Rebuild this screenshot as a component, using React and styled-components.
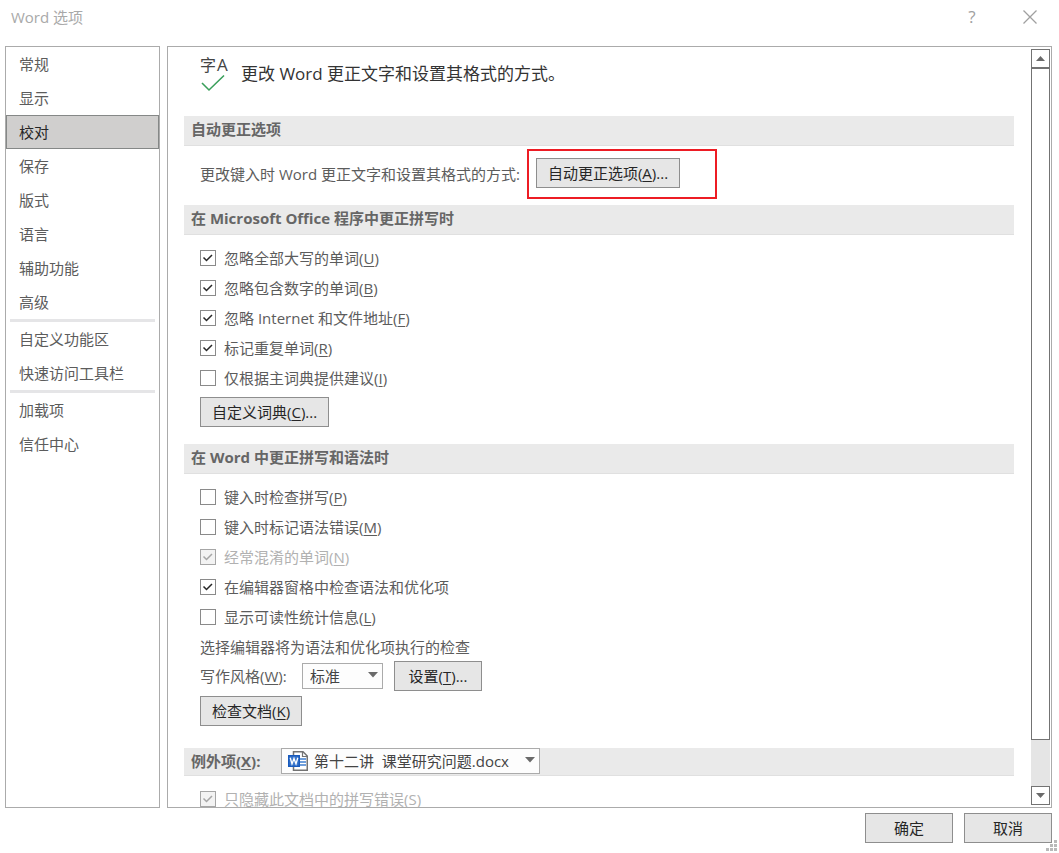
import React from "react";
import styled, { createGlobalStyle } from "styled-components";

const GlobalStyle = createGlobalStyle`
  * {
    box-sizing: border-box;
  }
  body {
    margin: 0;
    background-color: white;
  }
  body, button, input, select {
    font-family: "Open Sans", "Noto Sans CJK SC", sans-serif;
    font-size: 15px;
    line-height: 20px;
  }
  u {
    text-underline-offset: 2px;
    text-decoration-thickness: 1px;
  }
`;

const Dialog = styled.div`
  position: relative;
  display: flex;
  flex-direction: column;
  height: 100vh;
  color: #5c5c5c;
`;

const TitleBar = styled.header`
  display: flex;
  align-items: flex-start;
  height: 46px;
  padding: 7px 15px 0 11px;
  color: #a9a9a9;

  h1 {
    flex: 1;
    margin: 0;
    font-size: 15px;
    font-weight: normal;
  }
`;

const TitleButton = styled.button`
  display: flex;
  justify-content: center;
  align-items: center;
  width: 28px;
  height: 20px;
  margin-left: 30px;
  padding: 0;
  border: none;
  background: none;
  color: #a0a0a0;
  font-size: 17px;
`;

const Body = styled.div`
  flex: 1;
  min-height: 0;
  display: flex;
  gap: 7px;
  padding: 0 7px 0 5px;
`;

const Sidebar = styled.nav`
  width: 155px;
  flex-shrink: 0;
  border: 1px solid #ababab;

  hr {
    height: 3px;
    margin: 0 4px;
    border: none;
    background-color: #e5e5e7;
  }
`;

const NavItem = styled.button`
  display: block;
  width: 100%;
  height: 34px;
  padding: 0 12px;
  border: 1px solid ${(props) => (props.$active ? "#858887" : "transparent")};
  background-color: ${(props) => (props.$active ? "#d0cfce" : "transparent")};
  color: ${(props) => (props.$active ? "#262626" : "#5c5c5c")};
  text-align: left;
`;

const Panel = styled.main`
  flex: 1;
  min-width: 0;
  display: flex;
  border: 1px solid #ababab;
`;

const Content = styled.div`
  flex: 1;
  min-width: 0;
  overflow: hidden;
  padding: 0 17px 0 16px;
`;

const Intro = styled.div`
  display: flex;
  align-items: center;
  gap: 12px;
  height: 54px;
  margin-bottom: 15px;
  padding-left: 16px;
  color: #333333;
  font-size: 17px;

  svg {
    overflow: visible;
  }
`;

const SectionTitle = styled.h2`
  height: 30px;
  margin: 0;
  padding: 3px 7px;
  border-bottom: 1px solid #e0e0e0;
  background-color: #eaeaea;
  color: #666666;
  font-size: 15px;
  font-weight: bold;
`;

const Section = styled.div`
  padding: ${(props) => props.$pad || "8px 16px 13px"};
`;

const Row = styled.div`
  display: flex;
  align-items: center;
  gap: ${(props) => props.$gap || "0"};
  height: ${(props) => props.$height || "30px"};
`;

const FieldLabel = styled.label`
  min-width: 91px;
`;

const Highlight = styled.div`
  width: 190px;
  height: 50px;
  padding: 7px;
  border: 2px solid #ed1c24;
`;

const Button = styled.button`
  display: block;
  min-width: ${(props) => (props.$wide ? "88px" : "0")};
  height: 30px;
  padding: 0 11px;
  border: 1px solid #8e8e8e;
  background-color: #e6e6e6;
  color: #262626;
  white-space: nowrap;
`;

const CheckLabel = styled.label`
  display: flex;
  align-items: center;
  gap: 8px;
  height: 30px;
  color: ${(props) => (props.$disabled ? "#b1b1b1" : "#5c5c5c")};
`;

const CheckBox = styled.span`
  display: grid;
  width: 16px;
  height: 16px;

  input, svg {
    grid-area: 1 / 1;
  }
  input {
    appearance: none;
    width: 16px;
    height: 16px;
    margin: 0;
    border: 1px solid #8a8a8a;
    background-color: white;
  }
  input:disabled {
    border-color: #a6a6a6;
    background-color: #f3f3f3;
  }
  svg {
    pointer-events: none;
    visibility: hidden;
  }
  input:checked + svg {
    visibility: visible;
  }
`;

const SelectBox = styled.span`
  display: grid;
  align-items: center;
  width: ${(props) => props.$width};
  height: 26px;

  select, svg {
    grid-area: 1 / 1;
  }
  select {
    appearance: none;
    width: 100%;
    height: 26px;
    padding: 0 20px 0 ${(props) => (props.$icon ? "32px" : "7px")};
    border: 1px solid #ababab;
    border-radius: 0;
    background-color: #fdfdfd;
    color: #444444;
  }
  svg {
    pointer-events: none;
  }
  .arrow {
    justify-self: end;
    margin-right: 5px;
    margin-bottom: 2px;
  }
  .file {
    margin-left: 7px;
  }
`;

const ExceptionBar = styled.div`
  display: flex;
  align-items: flex-start;
  height: 28px;
  padding-left: 7px;
  border-bottom: 1px solid #e0e0e0;
  background-color: #eaeaea;
  color: #666666;

  label {
    width: 90px;
    padding-top: 3px;
    font-weight: bold;
  }
`;

const ScrollBar = styled.div`
  display: flex;
  flex-direction: column;
  width: 19px;
  margin: 2px 1px 2px 0;
  background-color: #e5e5e5;

  button {
    display: flex;
    justify-content: center;
    align-items: center;
    width: 19px;
    height: 19px;
    padding: 0;
    border: 1px solid #737373;
    background-color: white;
  }
`;

const Track = styled.div`
  flex: 1;
`;

const Thumb = styled.div`
  height: 93.6%;
  border: 1px solid #737373;
  background-color: white;
`;

const Footer = styled.footer`
  display: flex;
  justify-content: flex-end;
  gap: 11px;
  height: 45px;
  padding: 5px 7px 0 0;
`;

const Grip = styled.svg`
  position: absolute;
  right: 2px;
  bottom: 2px;
`;

const Arrow = ({ up }) => (
  <svg width="9" height="5" viewBox="0 0 9 5" aria-hidden="true">
    <path d={up ? "M0 5L4.5 0L9 5Z" : "M0 0H9L4.5 5Z"} fill="#6a6a6a" />
  </svg>
);

const DropArrow = () => (
  <svg className="arrow" width="10" height="6" viewBox="0 0 10 6" aria-hidden="true">
    <path d="M0 0H10L5 5.5Z" fill="#6a6a6a" />
  </svg>
);

const ProofIcon = () => (
  <svg width="29" height="36" viewBox="0 0 29 36" aria-hidden="true">
    <text x="0" y="15" fontSize="16" fill="#444444">字</text>
    <text x="17" y="15" fontSize="17" fill="#444444">A</text>
    <path d="M2 27L9 34L24 19.5" fill="none" stroke="#3a9f5b" strokeWidth="1.6" />
  </svg>
);

const WordIcon = () => (
  <svg className="file" width="20" height="20" viewBox="0 0 20 20" aria-hidden="true">
    <path d="M5.5 4V0.75H15L19.25 5V19.25H5.5V16" fill="white" stroke="#737373" strokeWidth="1.5" />
    <path d="M14.5 1V5.5H19" fill="none" stroke="#737373" strokeWidth="1.2" />
    <path d="M12 8H18M12 11H18M12 14H18" stroke="#3f7fd0" strokeWidth="1.3" />
    <rect x="0" y="4" width="12" height="12" fill="#185abd" />
    <rect x="1.5" y="5.5" width="9" height="9" fill="#3c78cc" />
    <path d="M2.2 6.8L4 13L6 7.5L8 13L9.8 6.8" fill="none" stroke="white" strokeWidth="1.3" />
  </svg>
);

const Check = ({ text, hotkey, checked, disabled }) => (
  <CheckLabel $disabled={disabled}>
    <CheckBox>
      <input type="checkbox" defaultChecked={checked} disabled={disabled} />
      <svg width="16" height="16" viewBox="0 0 16 16" aria-hidden="true">
        <path
          d="M3.5 7.5L6.5 10.5L12 5"
          fill="none"
          stroke={disabled ? "#a6a6a6" : "#262626"}
          strokeWidth="1.5"
        />
      </svg>
    </CheckBox>
    <span>
      {text}
      {hotkey && <>(<u>{hotkey}</u>)</>}
    </span>
  </CheckLabel>
);

const navGroups = [
  ["常规", "显示", "校对", "保存", "版式", "语言", "辅助功能", "高级"],
  ["自定义功能区", "快速访问工具栏"],
  ["加载项", "信任中心"],
];

const officeChecks = [
  { text: "忽略全部大写的单词", hotkey: "U", checked: true },
  { text: "忽略包含数字的单词", hotkey: "B", checked: true },
  { text: "忽略 Internet 和文件地址", hotkey: "F", checked: true },
  { text: "标记重复单词", hotkey: "R", checked: true },
  { text: "仅根据主词典提供建议", hotkey: "I" },
];

const wordChecks = [
  { text: "键入时检查拼写", hotkey: "P" },
  { text: "键入时标记语法错误", hotkey: "M" },
  { text: "经常混淆的单词", hotkey: "N", checked: true, disabled: true },
  { text: "在编辑器窗格中检查语法和优化项", checked: true },
  { text: "显示可读性统计信息", hotkey: "L" },
];

const App = () => {
  return (
    <>
      <GlobalStyle />
      <Dialog>
        <TitleBar>
          <h1>Word 选项</h1>
          <TitleButton aria-label="帮助">?</TitleButton>
          <TitleButton aria-label="关闭">
            <svg width="14" height="14" viewBox="0 0 14 14" aria-hidden="true">
              <path d="M0.5 0.5L13.5 13.5M13.5 0.5L0.5 13.5" stroke="#a0a0a0" strokeWidth="1.3" />
            </svg>
          </TitleButton>
        </TitleBar>
        <Body>
          <Sidebar>
            {navGroups.map((group, i) => (
              <React.Fragment key={i}>
                {i > 0 && <hr />}
                {group.map((name) => (
                  <NavItem key={name} $active={name === "校对"}>{name}</NavItem>
                ))}
              </React.Fragment>
            ))}
          </Sidebar>
          <Panel>
            <Content>
              <Intro>
                <ProofIcon />
                <span>更改 Word 更正文字和设置其格式的方式。</span>
              </Intro>

              <SectionTitle>自动更正选项</SectionTitle>
              <Section $pad="3px 16px 6px">
                <Row $height="50px" $gap="7px">
                  <span>更改键入时 Word 更正文字和设置其格式的方式:</span>
                  <Highlight>
                    <Button>自动更正选项(<u>A</u>)...</Button>
                  </Highlight>
                </Row>
              </Section>

              <SectionTitle>在 Microsoft Office 程序中更正拼写时</SectionTitle>
              <Section>
                {officeChecks.map((item) => (
                  <Check key={item.text} {...item} />
                ))}
                <Row $height="38px">
                  <Button>自定义词典(<u>C</u>)...</Button>
                </Row>
              </Section>

              <SectionTitle>在 Word 中更正拼写和语法时</SectionTitle>
              <Section $pad="8px 16px 17px">
                {wordChecks.map((item) => (
                  <Check key={item.text} {...item} />
                ))}
                <Row $height="29px">选择编辑器将为语法和优化项执行的检查</Row>
                <Row $gap="11px">
                  <FieldLabel htmlFor="style">写作风格(<u>W</u>):</FieldLabel>
                  <SelectBox $width="81px">
                    <select id="style">
                      <option>标准</option>
                    </select>
                    <DropArrow />
                  </SelectBox>
                  <Button $wide>设置(<u>T</u>)...</Button>
                </Row>
                <Row $height="40px">
                  <Button>检查文档(<u>K</u>)</Button>
                </Row>
              </Section>

              <ExceptionBar>
                <label htmlFor="doc">例外项(<u>X</u>):</label>
                <SelectBox $width="259px" $icon>
                  <select id="doc">
                    <option>第十二讲{"\u00a0\u00a0"}课堂研究问题.docx</option>
                  </select>
                  <WordIcon />
                  <DropArrow />
                </SelectBox>
              </ExceptionBar>
              <Section>
                <Check text="只隐藏此文档中的拼写错误" hotkey="S" checked disabled />
              </Section>
            </Content>
            <ScrollBar>
              <button aria-label="向上滚动"><Arrow up /></button>
              <Track>
                <Thumb />
              </Track>
              <button aria-label="向下滚动"><Arrow /></button>
            </ScrollBar>
          </Panel>
        </Body>
        <Footer>
          <Button $wide>确定</Button>
          <Button $wide>取消</Button>
        </Footer>
        <Grip width="11" height="11" viewBox="0 0 11 11" aria-hidden="true">
          <path
            d="M8 0h3v3h-3zM4 4h3v3h-3zM8 4h3v3h-3zM0 8h3v3h-3zM4 8h3v3h-3zM8 8h3v3h-3z"
            fill="#b9b9b9"
          />
        </Grip>
      </Dialog>
    </>
  );
};

export default App;
